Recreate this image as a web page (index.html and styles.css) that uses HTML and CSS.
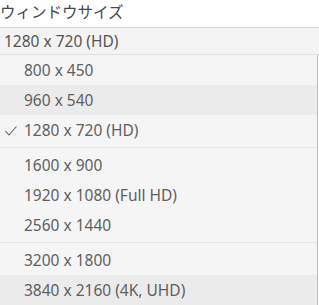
FILE: index.html
```html
<!DOCTYPE html>
<html lang="ja">
<head>
    <meta charset="UTF-8">
    <meta name="viewport" content="width=device-width, initial-scale=1.0">
    <title>Window size</title>
    <link rel="stylesheet" href="styles.css">
</head>
<body>
    <div class="title">ウィンドウサイズ</div>
    <div class="select">1280 x 720 (HD)</div>
    <div class="menu">
        <div class="group">
            <div class="item">800 x 450</div>
            <div class="item hover">960 x 540</div>
            <div class="item checked">
                <svg class="check" width="12" height="10" viewBox="0 0 12 10">
                    <path d="M0.5 5.2 L4 9 L11.5 0.5" fill="none" stroke="#666" stroke-width="1.1"/>
                </svg>
                1280 x 720 (HD)
            </div>
        </div>
        <div class="group">
            <div class="item">1600 x 900</div>
            <div class="item">1920 x 1080 (Full HD)</div>
            <div class="item">2560 x 1440</div>
        </div>
        <div class="group">
            <div class="item">3200 x 1800</div>
            <div class="item hover">3840 x 2160 (4K, UHD)</div>
        </div>
    </div>
</body>
</html>
```

FILE: styles.css
```css
*{
    margin: 0px;
    padding: 0px;
    box-sizing: border-box;
}

body{
    font-family: "Noto Sans", "Noto Sans CJK JP", sans-serif;
    background: #fff;
    color: #5c5c5c;
    width: 319px;
    height: 305px;
    overflow: hidden;
}

.title{
    height: 27px;
    padding-top: 1px;
    font-family: "Noto Sans CJK JP", sans-serif;
    font-size: 15.5px;
    line-height: 20px;
    color: #484848;
}

.select{
    height: 28px;
    background: #f3f3f3;
    border-top: 1px solid #d8d8d8;
    border-bottom: 1px solid #e2e2e2;
    padding-left: 4px;
    font-size: 15.5px;
    line-height: 26px;
    color: #555;
}

.menu{
    width: 318px;
    background: #f5f5f5;
    border-right: 1px solid #bdbdbd;
    border-bottom: 1px solid #8a8a8a;
}

.menu .group{
    padding-bottom: 2px;
}

.menu .group + .group{
    border-top: 1px solid #e6e6e6;
    padding-top: 2px;
}

.menu .group:last-child{
    padding-bottom: 0px;
}

.menu .item{
    position: relative;
    height: 30px;
    line-height: 30px;
    padding-left: 24px;
    font-size: 15.5px;
    color: #5f5f5f;
}

.menu .item.hover{
    background: #ebebeb;
}

.menu .item .check{
    position: absolute;
    left: 5px;
    top: 11px;
}
```
